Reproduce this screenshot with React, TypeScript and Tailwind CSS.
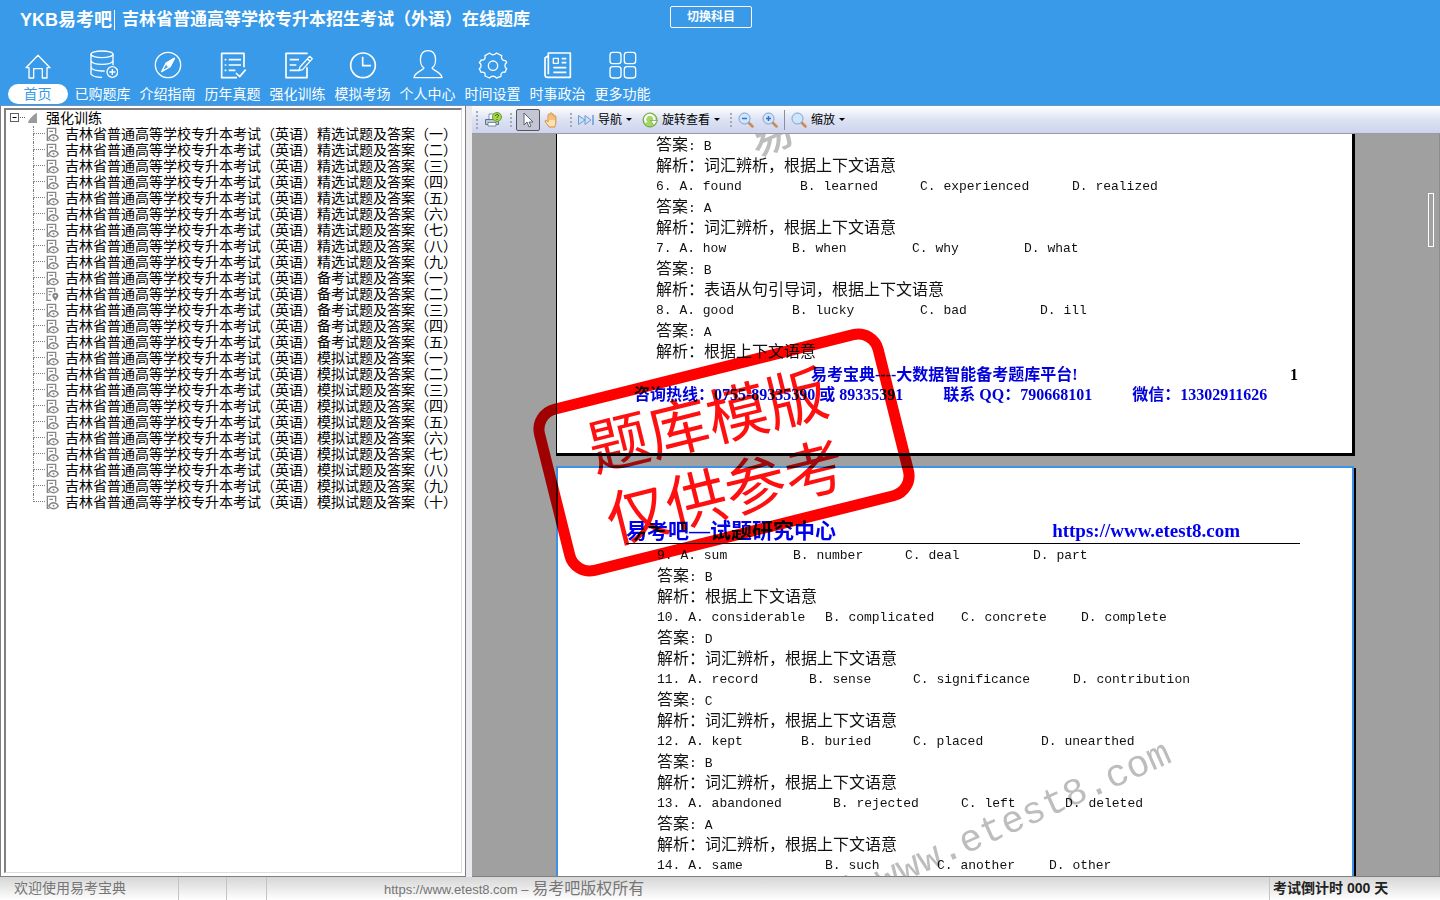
import { Fragment, useState } from 'react'
import type { ReactNode } from 'react'

interface NavItem {
  label: string
  icon: ReactNode
}

interface Option {
  col: number
  text: string
}

interface Question {
  options?: Option[]
  answer?: string
  analysis?: string
}

// One half-width character in the document grid
const CELL = 8

const NAV_ITEMS: NavItem[] = [
  {
    label: '首页',
    icon: <path d="M9 53 45 16l36 37h-9v31H58V56H32v28H18V53z" />,
  },
  {
    label: '已购题库',
    icon: (
      <>
        <ellipse cx="42" cy="13" rx="33" ry="10" />
        <path d="M9 13v59c3 6 16 10 33 10M75 13v33M9 32c3 8 16 11 33 11s30-3 33-11M9 52c3 7 16 11 33 11h8" />
        <circle cx="73" cy="66" r="16" />
        <path d="M64 66h18M73 57v18" />
      </>
    ),
  },
  {
    label: '介绍指南',
    icon: (
      <>
        <circle cx="45" cy="45" r="38" />
        <path d="M64 25 51 50 26 65l13-25z" />
        <path d="M64 25 39 40l12 10z" fill="white" />
        <circle cx="45" cy="45" r="3" />
      </>
    ),
  },
  {
    label: '历年真题',
    icon: (
      <path
        d="M78 52V10H11v73h46M20 29h5M32 29h37M20 45h5M32 45h37M20 61h5M32 61h20M54 69l11 11 18-21"
        strokeWidth="5"
      />
    ),
  },
  {
    label: '强化训练',
    icon: (
      <>
        <path d="M72 12V10H9v73h63V52M20 29h28M20 45h20M20 61h28" strokeWidth="5" />
        <path d="m80 19 8 7-29 33-11 3 3-11zM73 26l8 8" />
      </>
    ),
  },
  {
    label: '模拟考场',
    icon: (
      <>
        <circle cx="45" cy="46" r="37" strokeWidth="5" />
        <path d="M44 20v27h25" strokeWidth="5" />
      </>
    ),
  },
  {
    label: '个人中心',
    icon: (
      <path d="M33 54C18 45 16 2 45 2s27 43 12 52c0 6 28 11 30 29H3c2-18 30-23 30-29z" strokeWidth="4" />
    ),
  },
  {
    label: '时间设置',
    icon: (
      <>
        <path d="M35 9c4 7 16 7 20 0l16 8c-3 9 3 16 12 15l3 6c-7 4-7 14 0 18l-5 11c-9-2-14 4-12 12l-14 5c-4-7-16-7-20 0l-14-6c3-9-3-13-12-11L4 56c7-4 7-14 0-18l6-8c9 2 13-5 11-13z" />
        <circle cx="45" cy="47" r="14" />
      </>
    ),
  },
  {
    label: '时事政治',
    icon: (
      <>
        <path d="M16 9h66v73H14c-5 0-8-3-8-8V24l10-7zM16 9v64M31 53h39M31 67h39M56 26h14M56 38h14" strokeWidth="5" />
        <rect x="31" y="25" width="15" height="15" />
      </>
    ),
  },
  {
    label: '更多功能',
    icon: (
      <>
        <rect x="6" y="7" width="33" height="34" rx="8" />
        <rect x="49" y="7" width="34" height="34" rx="8" />
        <rect x="6" y="50" width="33" height="34" rx="8" />
        <rect x="49" y="50" width="34" height="34" rx="8" />
      </>
    ),
  },
]

const NUMERALS = ['一', '二', '三', '四', '五', '六', '七', '八', '九', '十']

const PAPERS = [
  { kind: '精选', count: 9 },
  { kind: '备考', count: 5 },
  { kind: '模拟', count: 10 },
].flatMap(({ kind, count }) =>
  NUMERALS.slice(0, count).map((n) => `吉林省普通高等学校专升本考试（英语）${kind}试题及答案（${n}）`),
)

const VOCAB = '词汇辨析，根据上下文语意'

const opts = (...items: [number, string][]): Option[] => items.map(([col, text]) => ({ col, text }))

const PAGE_ONE: Question[] = [
  { answer: 'B', analysis: VOCAB },
  { options: opts([0, '6. A. found'], [18, 'B. learned'], [33, 'C. experienced'], [52, 'D. realized']), answer: 'A', analysis: VOCAB },
  { options: opts([0, '7. A. how'], [17, 'B. when'], [32, 'C. why'], [46, 'D. what']), answer: 'B', analysis: '表语从句引导词，根据上下文语意' },
  { options: opts([0, '8. A. good'], [17, 'B. lucky'], [33, 'C. bad'], [48, 'D. ill']), answer: 'A', analysis: '根据上下文语意' },
]

const PAGE_TWO: Question[] = [
  { options: opts([0, '9. A. sum'], [17, 'B. number'], [31, 'C. deal'], [47, 'D. part']), answer: 'B', analysis: '根据上下文语意' },
  { options: opts([0, '10. A. considerable'], [21, 'B. complicated'], [38, 'C. concrete'], [53, 'D. complete']), answer: 'D', analysis: VOCAB },
  { options: opts([0, '11. A. record'], [19, 'B. sense'], [32, 'C. significance'], [52, 'D. contribution']), answer: 'C', analysis: VOCAB },
  { options: opts([0, '12. A. kept'], [18, 'B. buried'], [32, 'C. placed'], [48, 'D. unearthed']), answer: 'B', analysis: VOCAB },
  { options: opts([0, '13. A. abandoned'], [22, 'B. rejected'], [38, 'C. left'], [51, 'D. deleted']), answer: 'A', analysis: VOCAB },
  { options: opts([0, '14. A. same'], [21, 'B. such'], [35, 'C. another'], [49, 'D. other']) },
]

function Header() {
  const [active, setActive] = useState('首页')

  return (
    <header className="shrink-0 bg-[#389ae8] text-white">
      <div className="flex h-10 items-center pl-5">
        <h1 className="text-lg font-bold whitespace-nowrap">YKB易考吧</h1>
        <span className="ml-0.5 h-5 w-px bg-white" />
        <h2 className="ml-[7px] text-[17px] font-bold whitespace-nowrap">吉林省普通高等学校专升本招生考试（外语）在线题库</h2>
        <button
          type="button"
          className="mb-1.5 ml-[140px] h-[22px] w-[82px] rounded-xs border border-white text-xs font-bold whitespace-nowrap"
        >
          切换科目
        </button>
      </div>
      <nav className="flex pt-2.5 pb-px pl-[5px]">
        {NAV_ITEMS.map(({ label, icon }) => (
          <button
            key={label}
            type="button"
            onClick={() => setActive(label)}
            className="flex w-[65px] flex-col items-center gap-1"
          >
            <svg viewBox="0 0 90 90" className="size-[30px]" fill="none" stroke="currentColor" strokeWidth="4" strokeLinejoin="round">
              {icon}
            </svg>
            <span
              className={
                active === label
                  ? 'w-[60px] rounded-full bg-white text-sm leading-5 text-[#389ae8]'
                  : 'text-sm leading-5 whitespace-nowrap'
              }
            >
              {label}
            </span>
          </button>
        ))}
      </nav>
    </header>
  )
}

function PaperIcon({ pinned }: { pinned: boolean }) {
  return (
    <svg viewBox="0 0 39 45" className="h-[15px] w-[13px] shrink-0" fill="none" stroke="#858585" strokeWidth="4">
      {pinned ? (
        <>
          <path d="M15 40H3V4h23v10M8 14h11M8 23h6" />
          <path d="M28 42c-5-8-9-11-9-16a9 9 0 0 1 18 0c0 5-4 8-9 16z" fill="#858585" stroke="none" />
          <circle cx="28" cy="26" r="3" fill="white" stroke="none" />
        </>
      ) : (
        <>
          <path d="M10 40H4V4h25v16M10 13h11" />
          <path d="M8 33c7-13 22-13 29 0-7 11-22 11-29 0z" fill="white" />
          <circle cx="22.5" cy="32.5" r="3" fill="#858585" stroke="none" />
        </>
      )}
    </svg>
  )
}

function Sidebar() {
  const [open, setOpen] = useState(true)

  return (
    <aside className="flex w-[466px] shrink-0 border-x border-b border-[#808080] bg-white px-[3px] pt-0.5 pb-[3px]">
      <div className="min-w-0 flex-1 border-t-2 border-r border-b border-l-2 border-t-[#808080] border-r-[#dcdcdc] border-b-[#dcdcdc] border-l-[#808080] pl-1 text-sm text-black">
        <button type="button" onClick={() => setOpen(!open)} className="flex h-4 items-center leading-4">
          <svg viewBox="0 0 28 14" className="h-3.5 w-7" fill="none" stroke="#606060">
            <rect x="0.5" y="2.5" width="8" height="8" />
            <path d="M2.5 6.5h4" stroke="black" />
            <path d="M10 6.5h6" strokeDasharray="1 1" />
            <path d="M18 12c0-3 6-9 9-10v10z" fill="#9a9a9a" stroke="none" />
          </svg>
          <span className="ml-2">强化训练</span>
        </button>
        {open && (
          <ul className="ml-[23px]">
            {PAPERS.map((paper, i) => (
              <li key={paper} className="flex h-4 items-center">
                <span className="flex h-4 w-3 flex-col">
                  <span className="h-2 border-b border-l border-dotted border-[#808080]" />
                  {i < PAPERS.length - 1 && <span className="h-2 border-l border-dotted border-[#808080]" />}
                </span>
                <button type="button" className="flex items-center gap-1.5 pl-px leading-4 whitespace-nowrap">
                  <PaperIcon pinned={i === 10} />
                  {paper}
                </button>
              </li>
            ))}
          </ul>
        )}
      </div>
    </aside>
  )
}

function Grip() {
  return <span className="h-[18px] w-0 shrink-0 border-l-2 border-dotted border-[#a4a8b8]" />
}

function Magnifier({ sign }: { sign?: string }) {
  return (
    <svg viewBox="0 0 16 16" className="size-4" fill="none">
      <path d="m10.5 10.5 4 4" stroke="#c98a55" strokeWidth="2.5" strokeLinecap="round" />
      <circle cx="6.5" cy="6.5" r="5.5" fill="#cfe5fb" stroke="#7d9fd0" />
      {sign && <path d={sign} stroke="#3f6fb8" strokeWidth="1.5" />}
    </svg>
  )
}

function Caret() {
  return <span className="border-x-[3px] border-t-[3px] border-x-transparent border-t-black" />
}

function Toolbar() {
  return (
    <div className="flex h-7 shrink-0 items-center border-b border-[#9a9aa8] bg-linear-to-b from-white via-[#dde3f4] to-[#cdd4ec] pl-1 text-xs text-black">
      <Grip />
      <button type="button" aria-label="打印" className="ml-1.5">
        <svg viewBox="0 0 18 16" className="h-4 w-[18px]">
          <path d="M5 2h8v6H5z" fill="white" stroke="#8492aa" />
          <path d="M1.5 7.5h13v5h-13z" fill="#b8c5da" stroke="#62718c" />
          <path d="M4 10.5h8V14H4z" fill="white" stroke="#7d8aa2" />
          <circle cx="13" cy="5" r="4.5" fill="#a6d64b" stroke="#6f9e2c" />
          <path d="M11.5 4c0-2 3-2 3-.3 0 1-1.5 1-1.5 2M13 7v1" fill="none" stroke="#2e5c12" />
        </svg>
      </button>
      <span className="ml-2">
        <Grip />
      </span>
      <button
        type="button"
        aria-label="选择"
        className="ml-1 flex h-[22px] w-6 items-center justify-center rounded-xs border border-[#55565c] bg-[#c3c6d2]"
      >
        <svg viewBox="0 0 12 16" className="h-4 w-3">
          <path d="M2 1v12l3-3 2 5 2-1-2-4h4z" fill="white" stroke="#5a6478" />
        </svg>
      </button>
      <button type="button" aria-label="移动" className="ml-1">
        <svg viewBox="0 0 16 16" className="size-4">
          <path
            d="M5 15c-1-2-4-5-4-6 0-1 2-1 3 1V3c0-1 1.5-1 2 0V1.5c0-1 1.8-1 2 0V3c0-1 1.8-1 2 0v1.5c.3-1 1.8-1 1.8 0V11c0 2-1 3-1 4z"
            fill="#fbe0b4"
            stroke="#d88a32"
          />
          <path d="M6 3v5M8 3v5M10 4v4" stroke="#e3a252" />
        </svg>
      </button>
      <span className="ml-2.5">
        <Grip />
      </span>
      <button type="button" className="ml-1.5 flex items-center gap-1 whitespace-nowrap">
        <svg viewBox="0 0 16 12" className="h-3 w-4" fill="#c9e0f8" stroke="#6e9ad0">
          <path d="M.5 1.5 7 6 .5 10.5zM7 1.5 13 6l-6 4.5z" />
          <path d="M15 1v10" strokeWidth="1.5" />
        </svg>
        导航
        <Caret />
      </button>
      <button type="button" className="ml-2.5 flex items-center gap-1 whitespace-nowrap">
        <svg viewBox="0 0 16 16" className="size-4">
          <circle cx="8" cy="8" r="7" fill="#a6d66a" stroke="#6aa03a" />
          <path d="M4.5 10.5A4.5 4.5 0 1 1 12 9" fill="none" stroke="white" strokeWidth="2" />
          <path d="M8.5 8.5h7L12 13.5z" fill="white" stroke="#6aa03a" strokeWidth=".7" />
        </svg>
        旋转查看
        <Caret />
      </button>
      <span className="ml-2.5">
        <Grip />
      </span>
      <button type="button" aria-label="缩小" className="ml-1.5">
        <Magnifier sign="M4 6.5h5" />
      </button>
      <button type="button" aria-label="放大" className="ml-2">
        <Magnifier sign="M4 6.5h5M6.5 4v5" />
      </button>
      <span className="mx-1.5 h-5 w-px bg-[#8b8d98]" />
      <button type="button" className="flex items-center gap-1 whitespace-nowrap">
        <Magnifier />
        缩放
        <Caret />
      </button>
    </div>
  )
}

function OptionRow({ options }: { options: Option[] }) {
  return (
    <p className="flex h-[21px] items-center font-['Liberation_Mono','Noto_Sans_CJK_SC',monospace] text-[13px]">
      {options.map(({ col, text }, i) => {
        const next = options[i + 1]
        return (
          <span key={col} style={next && { width: (next.col - col) * CELL }}>
            {text}
          </span>
        )
      })}
    </p>
  )
}

function Questions({ items }: { items: Question[] }) {
  return (
    <div className="pl-[99px] whitespace-nowrap text-[#111]">
      {items.map(({ options, answer, analysis }, i) => (
        <Fragment key={i}>
          {options && <OptionRow options={options} />}
          {answer && (
            <p className="h-5 text-base leading-5">
              答案<span className="font-['Liberation_Mono',monospace] text-[13px]">: {answer}</span>
            </p>
          )}
          {analysis && <p className="h-[21px] text-base leading-[21px]">解析：{analysis}</p>}
        </Fragment>
      ))}
    </div>
  )
}

function Stamp() {
  return (
    <div className="absolute top-[230px] -left-3 flex h-[177px] w-[360px] -rotate-14 flex-col justify-center rounded-[26px] border-[11px] border-[#ff0000] pt-1.5 pr-4 text-center text-[61px] leading-[74px] whitespace-nowrap text-[#ff1010] mix-blend-multiply">
      <span>题库模版</span>
      <span>仅供参考</span>
    </div>
  )
}

function Viewer() {
  return (
    <div className="relative isolate min-h-0 flex-1 overflow-hidden border-r border-[#8c8c94] bg-[#a0a0a0]">
      <div className="flex justify-center">
        <div className="relative flex w-[799px] shrink-0 flex-col gap-2.5">
          <section className="relative border-r-[3px] border-b-[3px] border-l border-black bg-white pb-12">
            <span className="absolute -top-[21px] left-[192px] -rotate-24 text-[44px] leading-none font-medium text-[#bdbdbd]">
              易
            </span>
            <div className="relative pt-px">
              <Questions items={PAGE_ONE} />
            </div>
            <footer className="relative pt-[3px] font-['Liberation_Serif','Noto_Sans_CJK_SC',serif] text-base leading-5 font-bold whitespace-nowrap text-[#0000dc]">
              <div className="flex items-center pl-[254px]">
                <span>易考宝典----大数据智能备考题库平台!</span>
                <span className="ml-auto pr-[54px] text-black">1</span>
              </div>
              <div className="flex gap-10 pl-[77px]">
                <span>咨询热线：0755-89335390 或 89335391</span>
                <span>联系 QQ：790668101</span>
                <span>微信：13302911626</span>
              </div>
            </footer>
          </section>
          <section className="relative mr-px h-[640px] border-2 border-[#3c92e8] bg-white shadow-[2px_2px_0_black]">
            <span className="absolute top-[358px] left-[175px] origin-center -rotate-24 font-['Liberation_Mono','Noto_Sans_CJK_SC',monospace] text-[38px] leading-none whitespace-nowrap text-[#bdbdbd]">
              易考吧 www.etest8.com
            </span>
            <header className="relative mr-[52px] ml-[68px] flex items-end justify-between border-b border-black pt-[51px] pr-[60px] font-['Liberation_Serif','Noto_Sans_CJK_SC',serif] text-[21px] leading-6 font-bold whitespace-nowrap text-[#0000ee]">
              <span>易考吧—试题研究中心</span>
              <a href="https://www.etest8.com" className="text-[19px] leading-6">
                https://www.etest8.com
              </a>
            </header>
            <div className="relative pt-px">
              <Questions items={PAGE_TWO} />
            </div>
          </section>
          <Stamp />
        </div>
      </div>
      <span className="absolute top-[59px] right-[5px] h-[54px] w-1.5 border border-white" />
    </div>
  )
}

function StatusBar() {
  return (
    <footer className="flex h-[23px] shrink-0 items-stretch bg-linear-to-b from-[#d6d6d6] to-white text-sm leading-[22px] whitespace-nowrap text-[#757575]">
      <span className="w-[179px] border-r border-[#c4c4c4] pl-3.5">欢迎使用易考宝典</span>
      <span className="w-12 border-r border-[#c4c4c4]" />
      <span className="w-10 border-r border-[#c4c4c4]" />
      <span className="flex-1 pl-[117px] text-base leading-[23px]">
        <span className="text-[13px]">https://www.etest8.com – </span>易考吧版权所有
      </span>
      <span className="w-[171px] border-l border-[#c4c4c4] pl-[3px] font-bold text-[#222]">考试倒计时 000 天</span>
    </footer>
  )
}

export default function App() {
  return (
    <div className="flex h-screen flex-col overflow-hidden bg-[#e9e9ee] font-['Liberation_Sans','Noto_Sans_CJK_SC',sans-serif]">
      <Header />
      <main className="flex min-h-0 flex-1 gap-1.5 border-t border-[#6d94c4]">
        <Sidebar />
        <div className="flex min-w-0 flex-1 flex-col border-b border-[#808080]">
          <Toolbar />
          <Viewer />
        </div>
      </main>
      <StatusBar />
    </div>
  )
}
